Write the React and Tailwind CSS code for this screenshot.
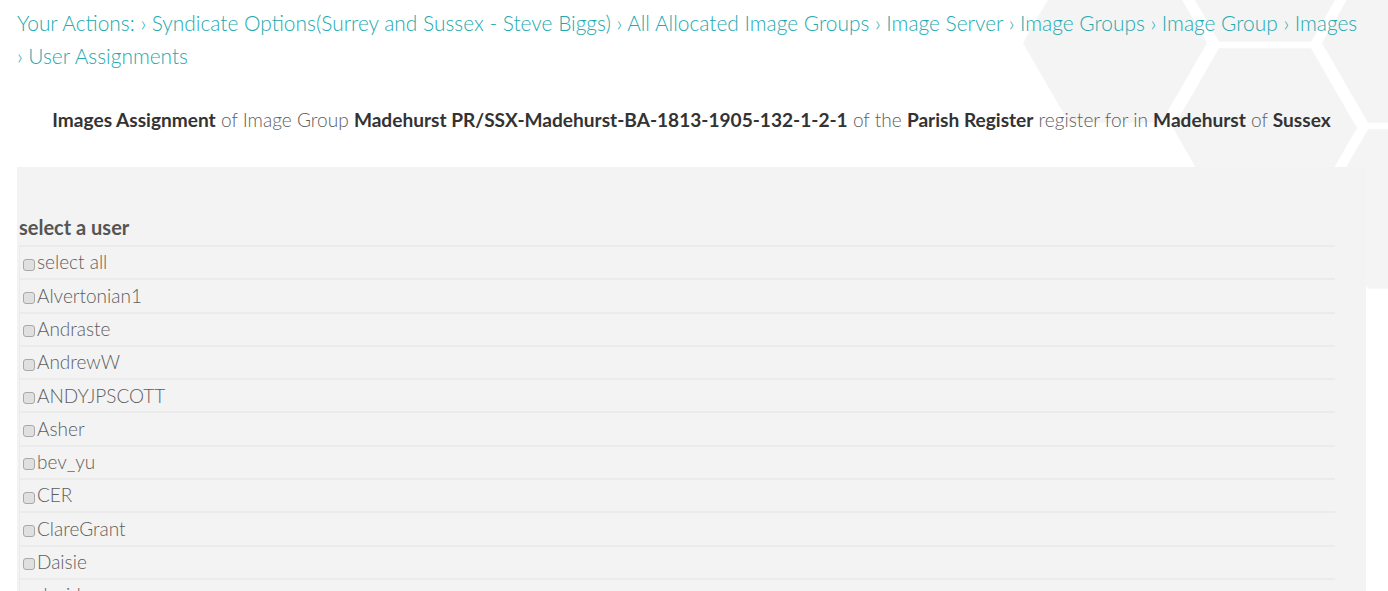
import React from "react";

const crumbs = [
  "Syndicate Options(Surrey and Sussex - Steve Biggs)",
  "All Allocated Image Groups",
  "Image Server",
  "Image Groups",
  "Image Group",
  "Images",
  "User Assignments",
];

const users = [
  "select all",
  "Alvertonian1",
  "Andraste",
  "AndrewW",
  "ANDYJPSCOTT",
  "Asher",
  "bev_yu",
  "CER",
  "ClareGrant",
  "Daisie",
  "david",
];

// flat-top hexagon points
const hex = (cx, cy, r = 92) => {
  const pts = [];
  for (let i = 0; i < 6; i++) {
    const a = (Math.PI / 3) * i;
    pts.push(`${(cx + r * Math.cos(a)).toFixed(1)},${(cy + r * Math.sin(a)).toFixed(1)}`);
  }
  return pts.join(" ");
};

const HexBackground = () => (
  <svg
    className="absolute top-0 right-0 pointer-events-none"
    width="388"
    height="300"
    viewBox="1000 0 388 300"
  >
    <g fill="#f4f4f4">
      <polygon points={hex(1115, 43)} />
      <polygon points={hex(1265, -38)} />
      <polygon points={hex(1265, 128)} />
      <polygon points={hex(1414, 43)} />
      <polygon points={hex(1414, 209)} />
    </g>
  </svg>
);

const App = () => {
  return (
    <div
      className="relative min-h-[591px] bg-white overflow-hidden"
      style={{ fontFamily: "'Source Sans Pro', Lato, 'Open Sans', sans-serif" }}
    >
      <HexBackground />
      <div className="relative pl-[17px] pr-[22px]">
        <div className="pt-[6px] text-[20.9px] leading-[33px] font-light text-[#22aab0]">
          Your Actions:
          {crumbs.map((c) => (
            <span key={c}>
              {" "}
              {"›\u00a0"}
              {c}
            </span>
          ))}
        </div>

        <p className="mt-[35px] text-center text-[19.1px] leading-[26px] font-light text-[#5e5e5e]">
          <b className="font-bold text-[#333]">Images Assignment</b> of Image Group{" "}
          <b className="font-bold text-[#333]">Madehurst PR/SSX-Madehurst-BA-1813-1905-132-1-2-1</b>{" "}
          of the <b className="font-bold text-[#333]">Parish Register</b> register for in{" "}
          <b className="font-bold text-[#333]">Madehurst</b> of{" "}
          <b className="font-bold text-[#333]">Sussex</b>
        </p>

        <div className="mt-[34px] bg-[#f3f3f3] pt-[47px] pb-4 pr-[31px] pl-[2px]">
          <h4 className="text-[20px] leading-[26px] font-bold text-[#555] mb-[5px]">
            select a user
          </h4>
          <ul className="border-l border-[#ebebeb]">
            {users.map((u) => (
              <li
                key={u}
                className="flex items-center h-[33.3px] border-t-2 border-[#ebebeb] pl-[3px] text-[19px] font-light text-[#5e5e5e]"
              >
                <span className="mt-[4px] mr-[2px] inline-block w-[12px] h-[12px] rounded-[3px] border border-[#a9a9a9] bg-[#e0e0e0]" />
                {u}
              </li>
            ))}
          </ul>
        </div>
      </div>
    </div>
  );
};

export default App;
